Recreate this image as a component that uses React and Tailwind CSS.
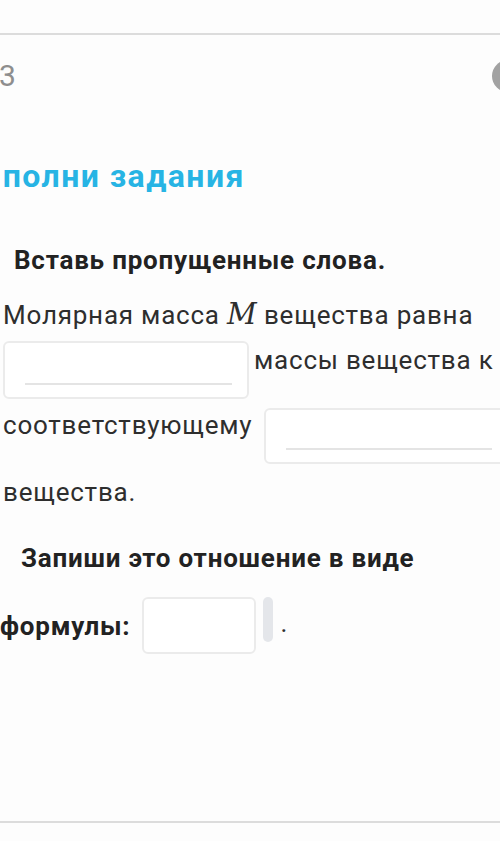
import React from "react";

const Blank = ({ className }) => (
  <div className={`relative shrink-0 rounded-md border-2 border-[#ebebeb] bg-white ${className}`}>
    <div className="absolute left-[20px] right-[15px] bottom-[12px] h-[2px] bg-[#e4e4e4]" />
  </div>
);

export default function App() {
  return (
    <div className="w-[500px] h-[841px] overflow-hidden bg-[#fdfdfd] text-[#2e2e2e] font-['Roboto',sans-serif]">
      <div className="h-[33px]" />
      <div className="h-[2px] bg-[#dcdcdc]" />

      <div className="flex items-center justify-between h-[82px]">
        <span className="text-[30px] text-[#8e8e8e] leading-none -ml-[1px]">3</span>
        <div className="w-[32px] h-[32px] rounded-full bg-[#a2a2a2] -mr-[24px] shrink-0" />
      </div>

      <h1 className="mt-[39px] -ml-[47px] text-[32px] tracking-[0.045em] font-bold text-[#27b4e4] leading-[40px] whitespace-nowrap">
        Выполни задания
      </h1>

      <p className="mt-[48px] ml-[14px] text-[26px] tracking-[0.03em] font-bold text-[#222] leading-[32px] whitespace-nowrap">
        Вставь пропущенные слова.
      </p>

      <div className="mt-[22px] pl-[3px] text-[26px] tracking-[0.03em] leading-[32px]">
        <div className="whitespace-nowrap">
          Молярная масса{" "}
          <span className="font-['DejaVu_Serif',serif] italic text-[29px] tracking-normal">M</span>{" "}
          вещества равна
        </div>

        <div className="flex items-start mt-[10px]">
          <Blank className="w-[246px] h-[58px]" />
          <span className="ml-[5px] mt-[3px] whitespace-nowrap">массы вещества к</span>
        </div>

        <div className="flex items-start mt-[9px] whitespace-nowrap">
          <span className="mt-[1px]">соответствующему</span>
          <Blank className="ml-[12px] w-[245px] h-[56px]" />
        </div>

        <div className="mt-[12px]">вещества.</div>
      </div>

      <p className="mt-[34px] ml-[21px] text-[26px] tracking-[0.03em] font-bold text-[#222] leading-[32px] whitespace-nowrap">
        Запиши это отношение в виде
      </p>

      <div className="flex items-start mt-[23px] text-[26px] tracking-[0.03em] leading-[32px]">
        <span className="mt-[13px] font-bold text-[#222] whitespace-nowrap">формулы:</span>
        <div className="ml-[12px] w-[114px] h-[57px] rounded-md border-2 border-[#ebebeb] bg-white shrink-0" />
        <div className="ml-[7px] w-[10px] h-[45px] rounded-full bg-[#e4e6ea] shrink-0" />
        <span className="ml-[7px] mt-[10px]">.</span>
      </div>

      <div className="mt-[167px] h-[2px] bg-[#dcdcdc]" />
    </div>
  );
}
